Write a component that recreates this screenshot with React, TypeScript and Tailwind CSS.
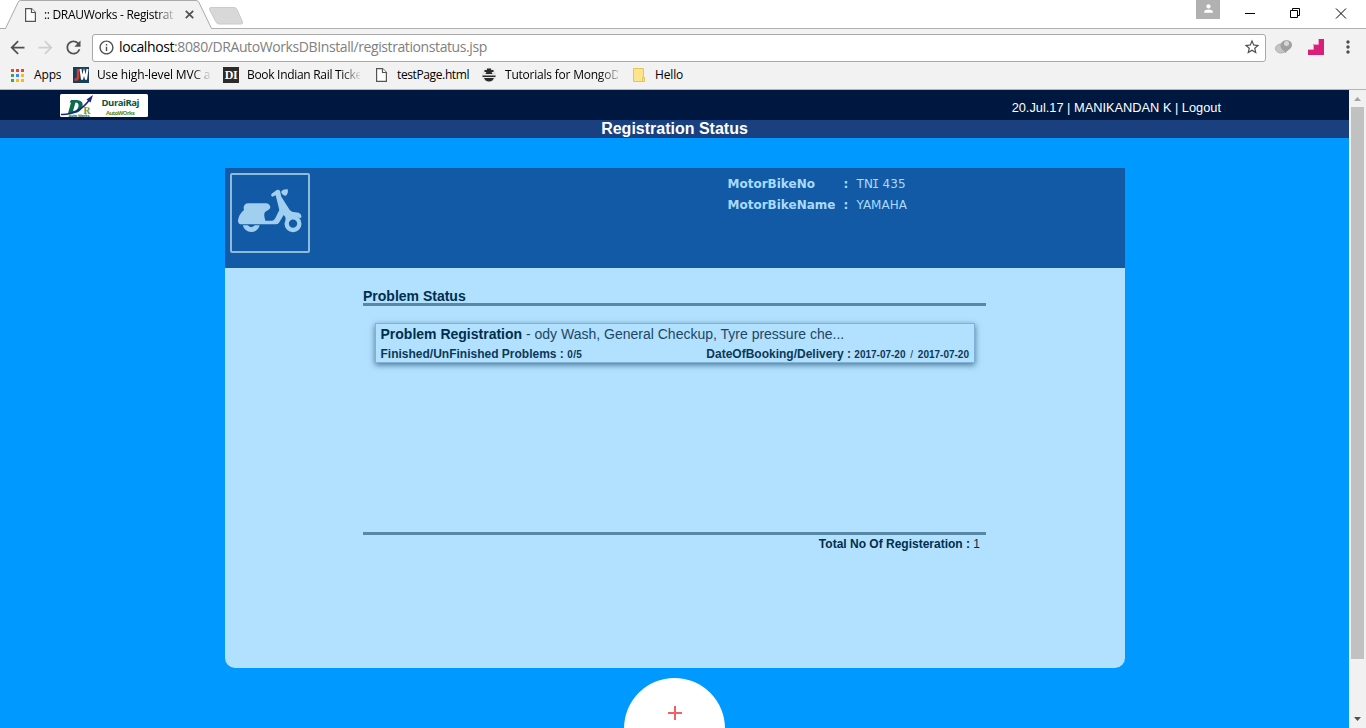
import type { ReactNode } from "react";
import {
  MdArrowBack,
  MdArrowForward,
  MdClose,
  MdInfoOutline,
  MdMoreVert,
  MdPerson,
  MdRefresh,
  MdStarBorder,
} from "react-icons/md";

const ui = "font-['Open_Sans','Noto_Sans',sans-serif]";

function PageIcon() {
  return (
    <svg width="11" height="14" viewBox="0 0 11 14" fill="#fff" stroke="#555" strokeWidth="1.2">
      <path d="M.6.6H6.5L10.4 4.5V13.4H.6Z" />
      <path d="M6.5.6V4.5H10.4" />
    </svg>
  );
}

function AppsIcon() {
  const colors = ["#ea4335", "#ea4335", "#ea4335", "#34a853", "#4285f4", "#fbbc05", "#34a853", "#fbbc05", "#fbbc05"];
  return (
    <svg width="13" height="13" viewBox="0 0 13 13">
      {colors.map((c, i) => (
        <rect key={i} x={(i % 3) * 5} y={Math.floor(i / 3) * 5} width="3" height="3" fill={c} />
      ))}
    </svg>
  );
}

function TabStrip() {
  return (
    <div className="flex h-[29px] shrink-0 bg-white border-b border-[#b0b0b0]">
      <div className="relative -mb-px h-[29px] w-[212px] shrink-0">
        <svg className="absolute inset-0" width="250" height="29" viewBox="0 0 250 29">
          <path d="M5.5 28.5L18 2.5Q18.700 .5 20.500 .5H196Q198 .5 199 2.500L211.500 28.500V29H5.500Z" fill="#f2f2f2" />
          <path d="M0 28.500H5.500L18 2.500Q18.700 .5 20.500 .5H196Q198 .5 199 2.500L211.500 28.500" fill="none" stroke="#a9a9a9" />
          <path d="M211 7.500H234Q236 7.500 237 9.500L242.500 22Q243 24 241 24H219Q217 24 216 22L209.500 9.500Q209 7.500 211 7.500Z" fill="#d8d8d8" stroke="#cacaca" />
        </svg>
        <div className="relative flex h-full items-center pl-[25px]">
          <PageIcon />
          <div className="ml-[8px] w-[131px] overflow-hidden whitespace-nowrap text-[12px] tracking-[-0.32px] text-black [mask-image:linear-gradient(to_right,#000_112px,transparent_133px)]">
            :: DRAUWorks - Registrat
          </div>
          <svg className="ml-[10px]" width="9" height="9" viewBox="0 0 9 9">
            <path d="M.8.8L8.200 8.200M8.200.8L.8 8.200" stroke="#505050" strokeWidth="1.700" />
          </svg>
        </div>
      </div>
      <div className="ml-auto flex">
        <div className="flex h-[19px] w-[24px] items-start justify-center bg-[#b1b1b1]">
          <MdPerson className="mt-[2px] text-white" size={13} />
        </div>
        <svg width="146" height="28" viewBox="0 0 146 28" fill="none" stroke="#000" strokeWidth="1">
          <path d="M25 13.500H35" />
          <path d="M70.500 10.500H77.500V17.500H70.500ZM72.500 10.500V8.500H79.500V15.500H77.500" />
          <path d="M116 8.500L126 18.500M126 8.500L116 18.500" />
        </svg>
      </div>
    </div>
  );
}

function AddressBar() {
  return (
    <div className="flex h-[36px] items-center pl-[7px]">
      <MdArrowBack className="text-[#505050]" size={21} />
      <MdArrowForward className="ml-[7px] text-[#cfcfcf]" size={21} />
      <MdRefresh className="ml-[7px] text-[#505050]" size={21} />
      <div className="ml-[8px] mt-px flex h-[28px] w-[1174px] items-center rounded-[3px] border border-[#a9a9a9] bg-white pb-px pl-[5px] pr-[4px]">
        <MdInfoOutline className="text-[#505050]" size={17} />
        <span className="-mt-px ml-[4px] whitespace-nowrap text-[14px] tracking-[-0.4px] text-black">
          localhost<span className="text-[#808080]">:8080/DRAutoWorksDBInstall/registrationstatus.jsp</span>
        </span>
        <MdStarBorder className="ml-auto text-[#505050]" size={18} />
      </div>
      <svg className="ml-[9px]" width="18" height="16" viewBox="0 0 18 16">
        <ellipse cx="6" cy="9.500" rx="5.500" ry="4.500" fill="#c4c4c4" stroke="#b0b0b0" />
        <path d="M5.500 7C5 0 17 -1 17 6C17 10 12 11 10.500 14.500C9.500 11 6 11 5.500 7Z" fill="#a0a0a0" />
        <circle cx="11.500" cy="4.500" r="2.500" fill="#d6d6d6" />
      </svg>
      <svg className="ml-[15px]" width="16" height="16" viewBox="0 0 16 16">
        <path d="M0 16V10H5V5H10V0H16V16Z" fill="#db1f78" />
        <path d="M0 10.500H5.500V5.500H10.500V0" fill="none" stroke="#eda0c4" />
      </svg>
      <MdMoreVert className="ml-[14px] text-[#505050]" size={20} />
    </div>
  );
}

function Bookmark({ icon, children, className }: { icon: ReactNode; children: ReactNode; className: string }) {
  return (
    <div className={`flex h-full shrink-0 items-center whitespace-nowrap ${className}`}>
      <div className="-mt-[2px] flex w-[16px] shrink-0 justify-center">{icon}</div>
      <div className="-mt-[2px] ml-[8px] overflow-hidden">{children}</div>
    </div>
  );
}

function Bookmarks() {
  return (
    <div className="flex h-[22px] items-center pl-[9px] text-[12px] tracking-[-0.15px] text-black">
      <Bookmark icon={<AppsIcon />} className="w-[64px] [&>div:last-child]:pl-px">Apps</Bookmark>
      <Bookmark
        className="w-[150px] [&>div:last-child]:w-[113px] [&>div:last-child]:[mask-image:linear-gradient(to_right,#000_95px,transparent_115px)]"
        icon={
          <svg width="16" height="16" viewBox="0 0 16 16">
            <path d="M0 0H16V16H0Z" fill="#173f5b" />
            <path d="M5 2V10Q5 13 1.500 12.500" fill="none" stroke="#d33a2f" strokeWidth="2.500" />
            <path d="M7.500 2L9 12.500L11 5L13 12.500L14.500 2" fill="none" stroke="#fff" strokeWidth="2" />
          </svg>
        }
      >
        Use high-level MVC a
      </Bookmark>
      <Bookmark
        className="w-[150px] [&>div:last-child]:w-[113px] [&>div:last-child]:tracking-[-0.3px] [&>div:last-child]:[mask-image:linear-gradient(to_right,#000_94px,transparent_115px)]"
        icon={
          <span className="flex h-[16px] w-[16px] items-center justify-center bg-[#2b2b2b] font-['Liberation_Serif',serif] text-[12px] font-bold leading-none tracking-[-0.3px] text-white">
            DI
          </span>
        }
      >
        Book Indian Rail Ticke
      </Bookmark>
      <Bookmark icon={<PageIcon />} className="w-[108px] tracking-[-0.38px]">testPage.html</Bookmark>
      <Bookmark
        className="w-[150px] [&>div:last-child]:w-[113px] [&>div:last-child]:tracking-[-0.22px] [&>div:last-child]:[mask-image:linear-gradient(to_right,#000_94px,transparent_119px)]"
        icon={
          <svg width="16" height="16" viewBox="0 0 16 16">
            <circle cx="8" cy="8" r="7.300" fill="#e6e6e6" />
            <path d="M3.500 3H6V1.500H10V3H12.500V5H10.500L11.500 7H4.500L5.500 5H3.500ZM1.500 8.500H14.500V10H1.500ZM3 11H13Q11.500 14.500 8 14.500T3 11Z" fill="#2a2a2a" />
          </svg>
        }
      >
        Tutorials for MongoD
      </Bookmark>
      <Bookmark
        className="w-[60px]"
        icon={
          <svg width="12" height="14" viewBox="0 0 12 14">
            <path d="M.5.5H10.500V9.500H11.500V13.500H.5Z" fill="#ffe48f" stroke="#e9c64f" />
            <path d="M9.500 13V9.500H11" fill="none" stroke="#e9c64f" />
          </svg>
        }
      >
        Hello
      </Bookmark>
    </div>
  );
}

function BrandLogo() {
  return (
    <svg width="88" height="23" viewBox="0 0 88 23">
      <rect width="88" height="23" rx="1.500" fill="#fff" />
      <path d="M11 6H17Q24 6.500 22.500 13Q20 19.500 12 19.500H8L11 8.500H9.500Z M15.500 8.500L13 17Q17 17 18.500 12.500Q19 8.500 15.500 8.500Z" fill="#0b6b4c" fillRule="evenodd" />
      <text x="23.500" y="19.500" fontFamily="Liberation Serif" fontWeight="700" fontSize="11" textLength="7" lengthAdjust="spacingAndGlyphs" fill="#71971f">R</text>
      <path d="M1 20.500Q19 21 30 5" fill="none" stroke="#1c2580" strokeWidth="1.500" />
      <path d="M33 1L26.500 5.500L30.500 8.500Z" fill="#1c2580" />
      <text x="8.500" y="22.600" fontFamily="DejaVu Sans" fontWeight="700" fontSize="3.500" textLength="21" fill="#14695c">Auto Works</text>
      <text x="41.500" y="12" fontFamily="Open Sans" fontWeight="700" fontSize="9.500" textLength="38" fill="#0b5540">DuraiRaj</text>
      <text x="46" y="20.500" fontFamily="Open Sans" fontWeight="700" fontSize="5.800" textLength="29" fill="#568a12">AutoWOrks</text>
    </svg>
  );
}

function Scooter() {
  return (
    <div className="h-[80px] w-[80px] rounded-[2px] border-2 border-[#8ebcd8]">
      <svg width="76" height="76" viewBox="36 45 228 228" fill="#a0cfef">
        <path d="M74 134Q78 130 86 130H140Q150 133 151 141Q150 149 139 153Q131 157 133 168Q134 176 136 182H157Q163 181 166 174L178 150L173 130L167 106L157 110Q151 106 155 101L170 90Q177 87 180 93L184 110L203 140Q209 152 216 155L236 158Q246 163 244 172L240 175Q219 160 197 181Q198 170 191 165L177 188Q174 193 167 193H62Q54 192 54 181Q57 162 72 150Q69 140 74 134Z" />
        <path d="M68 196H83Q93 207 105 196H119Q113 216 93 216Q75 216 68 196Z" />
        <circle cx="219" cy="191" r="19" fill="none" stroke="#a0cfef" strokeWidth="13" />
        <path d="M183 95Q190 86 203 88Q206 100 198 107Q187 107 183 95Z" />
      </svg>
    </div>
  );
}

function VehicleHeader() {
  return (
    <div className="flex h-[100px] items-start bg-[#125aa6] pl-[5px] pt-[5px]">
      <Scooter />
      <dl className="ml-[417.500px] mt-px grid grid-cols-[116px_13px_auto] font-['DejaVu_Sans',sans-serif] text-[12px] leading-[21px] text-[#a9daff]">
        <dt className="font-bold">MotorBikeNo</dt>
        <span className="font-bold">:</span>
        <dd className="whitespace-nowrap tracking-[0.15px]">
          TN<span className="-mx-px font-['DejaVu_Sans_Mono',monospace]">I</span> 435
        </dd>
        <dt className="font-bold">MotorBikeName</dt>
        <span className="font-bold">:</span>
        <dd>YAMAHA</dd>
      </dl>
    </div>
  );
}

function ProblemCard() {
  return (
    <div className="ml-[12px] h-[40px] w-[600px] border border-[#7fb1d6] px-[5px] shadow-[0_2px_6px_rgba(0,46,77,0.6)]">
      <div className="-ml-[0.500px] h-[21px] whitespace-nowrap text-[14px] leading-[20px] text-[#1d4763]">
        <b className="text-[#002e4d]">Problem Registration</b> - ody Wash, General Checkup, Tyre pressure che...
      </div>
      <div className="-ml-[0.500px] flex justify-between whitespace-nowrap text-[12px] font-bold leading-[19px] text-[#0c3857]">
        <span>
          Finished/UnFinished Problems : <span className="text-[10px] tracking-[0.4px]">0/5</span>
        </span>
        <span>
          DateOfBooking/Delivery :{" "}
          <span className="text-[10px]">
            2017-07-20 <span className="mx-[2px] font-normal">/</span> 2017-07-20
          </span>
        </span>
      </div>
    </div>
  );
}

export default function App() {
  return (
    <div className="flex h-[728px] w-[1366px] flex-col overflow-hidden bg-white">
      <header className={`shrink-0 ${ui}`}>
        <TabStrip />
        <div className="h-[61px] border-b border-[#b4b4b4] bg-[#f2f2f2]">
          <AddressBar />
          <Bookmarks />
        </div>
      </header>
      <div className="flex h-[638px]">
        <main className="flex w-[1349px] flex-col overflow-hidden bg-[#0099ff] font-['Liberation_Sans',Arial,sans-serif]">
          <div className="flex h-[30px] shrink-0 items-start justify-between bg-[#001840] pl-[60px] pr-[128px] pt-[4px]">
            <BrandLogo />
            <nav className="mt-[4px] whitespace-nowrap text-[12.8px] leading-[19px] text-white">
              20.Jul.17 | MANIKANDAN K | Logout
            </nav>
          </div>
          <h1 className="h-[18px] shrink-0 bg-[#1a4080] text-center text-[16px] font-bold leading-[18px] text-white">
            Registration Status
          </h1>
          <section className="ml-[225px] mt-[30px] h-[500px] w-[900px] shrink-0 overflow-hidden rounded-b-[10px] bg-[#b2e0ff] text-[#002e4d]">
            <VehicleHeader />
            <div className="ml-[138px] w-[623px] pt-[20px]">
              <h2 className="box-border h-[18px] border-b-[3px] border-[#5988a7] text-[14px] font-bold leading-[16px]">
                Problem Status
              </h2>
              <div className="h-[226px] pt-[17px]">
                <ProblemCard />
              </div>
              <div className="border-t-[3px] border-[#5988a7] pr-[6px] text-right text-[12px] leading-[18px]">
                <b>Total No Of Registeration :</b> 1
              </div>
            </div>
          </section>
          <button className="ml-[624px] mt-[10px] flex h-[101px] w-[101px] shrink-0 justify-center rounded-full bg-white pt-[28px]">
            <svg width="14" height="14" viewBox="0 0 14 14" className="block">
              <path d="M7 0V14M0 7H14" stroke="#f16063" strokeWidth="2" />
            </svg>
          </button>
        </main>
        <aside className="flex w-[17px] flex-col items-center bg-[#f1f1f1]">
          <svg width="17" height="17" viewBox="0 0 17 17">
            <path d="M5 11L8.500 7L12 11Z" fill="#a3a3a3" />
          </svg>
          <div className="h-[552px] w-[13px] bg-[#c1c1c1]" />
          <svg className="mt-auto" width="17" height="17" viewBox="0 0 17 17">
            <path d="M5 6L8.500 10L12 6Z" fill="#505050" />
          </svg>
        </aside>
      </div>
    </div>
  );
}
